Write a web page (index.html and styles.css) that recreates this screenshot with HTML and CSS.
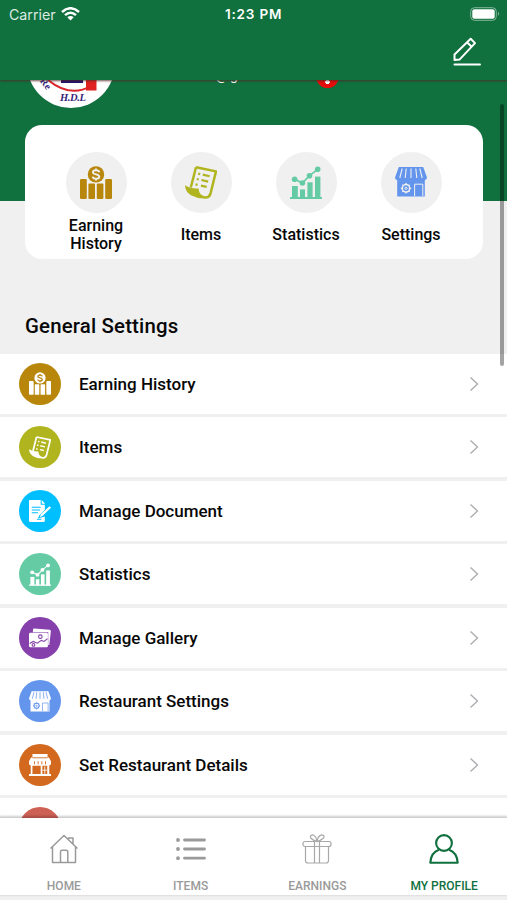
FILE: index.html
```html
<!DOCTYPE html>
<html lang="en">
<head>
<meta charset="utf-8">
<title>My Profile</title>
<link rel="stylesheet" href="styles.css">
</head>
<body>
<svg class="sprite" aria-hidden="true">
  <symbol id="earning" viewBox="0 0 32 33">
    <g fill="currentColor"><circle cx="16" cy="8.4" r="8.2"/><rect x="0" y="13" width="6.8" height="20" rx="1.2"/><rect x="8.4" y="17.6" width="6.6" height="15.4" rx="1"/><rect x="16.8" y="17.6" width="6.6" height="15.4" rx="1"/><rect x="25.2" y="13" width="6.8" height="20" rx="1.2"/></g>
    <path class="cut-line" d="M19.300 6.200C18.800 3.600 12.900 3.600 12.900 6.200 12.900 9 19.300 7.900 19.300 10.700 19.300 13.400 13.100 13.400 12.700 10.700M16 2.500V4.500M16 12.500V14.500" fill="none" stroke-width="1.900"/>
  </symbol>
  <symbol id="items" viewBox="0 0 32 33">
    <path d="M11 1.2 31 5.4 25.4 28Q23.8 32.2 19 31.4M11 1.2 5.8 21.5" fill="none" stroke="currentColor" stroke-width="2.5" stroke-linejoin="round"/>
    <path d="M0 19.2Q6 23 13.5 22.4 14.2 29.5 20 30.3L18.5 32.6Q12 32.4 6 29.2 .2 25.8 0 19.2Z" fill="currentColor"/>
    <path d="m13.2 7.6 2 .5m2.600 .5 6.8 1.6M11.8 13l2 .5m2.600 .5 6.8 1.6M10.5 18.4l2 .5m3.400.7 5.8 1.3" fill="none" stroke="currentColor" stroke-width="2.200"/>
  </symbol>
  <symbol id="stats" viewBox="0 0 32 33">
    <g fill="currentColor"><rect x="0" y="31" width="32" height="2" rx=".5"/><rect x="2" y="20" width="5.8" height="12"/><rect x="10" y="23.4" width="5" height="9"/><rect x="17.4" y="16.3" width="5.2" height="16"/><rect x="25" y="10.6" width="5.4" height="22"/><circle cx="4.6" cy="13.3" r="2.8"/><circle cx="12.4" cy="17" r="2.8"/><circle cx="19.5" cy="9.7" r="2.8"/><circle cx="27.7" cy="3.3" r="2.8"/></g>
    <path d="m4.6 13.3 7.8 3.7 7.1-7.3 8.2-6.4" fill="none" stroke="currentColor" stroke-width="1.6"/>
  </symbol>
  <symbol id="shop" viewBox="0 0 32 30">
    <path d="M3.8 0H28.2L32 10.5Q31.5 13 29.8 13V29.5H2.2V13Q.2 13 0 10.5Z" fill="currentColor"/>
    <g fill="none" class="cut-line"><path d="M7.2 1.5 4.8 11M11.2 1.5l-1 9.5M16 1.5V11M20.8 1.5l1 9.5M24.8 1.5l2.4 9.5" stroke-width="1.1"/><path d="M19.6 29V17.2h8.2V29" stroke-width="1"/><circle cx="11" cy="21.3" r="3.7" stroke-width="1.5"/><circle cx="11" cy="21.3" r="1.1" stroke-width="1"/><path d="M11 16v1.500M11 25v1.500M5.800 21.3h1.500M14.7 21.3h1.500M7.400 17.700l.9.9m5.4 5.4.9.9m0-7.200-.9.9M8.300 24l-.9.9" stroke-width="1.300"/></g>
  </symbol>
  <symbol id="document" viewBox="0 0 32 32">
    <path d="M1 0H17V7H23V14L15 22 13 27 23 24V30Q23 32 21 32H2Q0 32 0 30V1Q0 0 1 0ZM18.500 0 23.500 5.500H18.500ZM29.800 9 32 11.200 20 23 15.500 25 17.500 20.500Z" fill="currentColor"/>
    <path class="cut-line" d="M4 10.500H17M4 14.500H16M4 18.500H13M11.500 28H18" fill="none" stroke-width="1.500"/>
  </symbol>
  <symbol id="gallery" viewBox="0 0 32 28">
    <path d="M6 1Q6 0 7.500 0L30 2Q32 2.300 31.800 4L29.500 24H28V5.500H5.500Z" fill="currentColor"/>
    <rect x="0" y="6.500" width="27.500" height="21" rx="2" fill="currentColor"/>
    <g class="cut-line" fill="none" stroke-width="1.600"><circle cx="16.500" cy="12" r="2.600"/><path d="m1 22 5-3 6 2.500 6-4 4 1.500 5-4"/><circle cx="6.500" cy="24" r="2"/></g>
  </symbol>
  <symbol id="store" viewBox="0 0 32 32">
    <path d="M5 0H27V5H29L32 10.500V14Q32 16.500 29.500 16.500V29H32V32H0V29H2.500V16.500Q0 16.500 0 14V10.500L3 5H5ZM5 17V29H17V17ZM19.500 17V29H26.500V17Z" fill="currentColor" fill-rule="evenodd"/>
    <path class="cut-line" d="M5 5.500H27M8 10.500V15M13.300 10.500V15M18.700 10.500V15M24 10.500V15" fill="none" stroke-width="1.300"/>
    <path d="M23 18V29M20 23.500H26" stroke="currentColor" stroke-width="1.200"/>
  </symbol>
  <symbol id="chevron" viewBox="0 0 10 16"><path d="m1.500 1.500 7 6.500-7 6.500" fill="none" stroke="#adadb1" stroke-width="1.400"/></symbol>
</svg>

<header class="top">
  <div class="status">
    <div class="carrier">Carrier
      <svg width="19" height="14" viewBox="0 0 19 14"><path d="M1 5Q9.500-2.500 18 5M4 8.100Q9.500 3.300 15 8.100" fill="none" stroke="#fff" stroke-width="2.500"/><path d="M6.300 10.300Q9.500 7.700 12.700 10.300L9.500 13.600Z" fill="#fff"/></svg>
    </div>
    <div class="clock">1:23 PM</div>
    <svg class="battery" width="31" height="14" viewBox="0 0 31 14"><rect x=".7" y=".7" width="25.600" height="12.600" rx="3.800" fill="none" stroke="#86b79c"/><rect x="2.300" y="2.300" width="22.400" height="9.400" rx="2" fill="#fff"/><path d="M28 4.800Q30.200 6.800 28 9Z" fill="#86b79c"/></svg>
  </div>
  <div class="toolbar">
    <svg width="30" height="30" viewBox="0 0 30 30" fill="none" stroke="#fff"><path d="M2.500 23V17.500L18.700 1.800 23 6.100 7.500 22.600ZM15 5.300l4.600 4.500" stroke-width="2" stroke-linejoin="round"/><path d="M2.500 27.500H28" stroke-width="2" stroke-linecap="round"/></svg>
  </div>
</header>

<main class="content">
  <section class="hero">
    <div class="profile">
      <svg class="avatar" width="88" height="88" viewBox="0 0 88 88"><circle cx="44" cy="44" r="44" fill="#fff"/><path d="M21 60Q43 78 64 66" fill="none" stroke="#d8262b" stroke-width="2"/><rect x="34" y="48" width="22" height="15" fill="#24156b"/><rect x="59" y="55" width="10.500" height="15.500" fill="#e02020"/><text class="initials" x="46" y="80.500" text-anchor="middle" textLength="26">H.D.L</text><text class="ring" transform="translate(12.500 61) rotate(52)">Re</text></svg>
      <span class="email">@g</span>
      <span class="alert"></span>
    </div>
    <div class="card">
      <div class="tile"><div class="disc gold"><svg width="32" height="33"><use href="#earning"/></svg></div><div class="label">Earning History</div></div>
      <div class="tile"><div class="disc olive"><svg width="32" height="33"><use href="#items"/></svg></div><div class="label">Items</div></div>
      <div class="tile"><div class="disc mint"><svg width="32" height="33"><use href="#stats"/></svg></div><div class="label">Statistics</div></div>
      <div class="tile"><div class="disc blue"><svg width="32" height="30"><use href="#shop"/></svg></div><div class="label">Settings</div></div>
    </div>
  </section>
  <h2>General Settings</h2>
  <ul class="list">
    <li><span class="dot gold"><svg width="22" height="23"><use href="#earning"/></svg></span><span class="name">Earning History</span><svg class="chev"><use href="#chevron"/></svg></li>
    <li><span class="dot olive"><svg width="22" height="23"><use href="#items"/></svg></span><span class="name">Items</span><svg class="chev"><use href="#chevron"/></svg></li>
    <li><span class="dot sky"><svg width="22" height="22"><use href="#document"/></svg></span><span class="name">Manage Document</span><svg class="chev"><use href="#chevron"/></svg></li>
    <li><span class="dot mint"><svg width="22" height="23"><use href="#stats"/></svg></span><span class="name">Statistics</span><svg class="chev"><use href="#chevron"/></svg></li>
    <li><span class="dot purple"><svg width="22" height="20"><use href="#gallery"/></svg></span><span class="name">Manage Gallery</span><svg class="chev"><use href="#chevron"/></svg></li>
    <li><span class="dot blue"><svg width="22" height="21"><use href="#shop"/></svg></span><span class="name">Restaurant Settings</span><svg class="chev"><use href="#chevron"/></svg></li>
    <li><span class="dot orange"><svg width="22" height="22"><use href="#store"/></svg></span><span class="name">Set Restaurant Details</span><svg class="chev"><use href="#chevron"/></svg></li>
    <li><span class="dot red"></span></li>
  </ul>
  <div class="scrollbar"></div>
</main>

<nav class="tabs">
  <a class="tab"><svg width="30" height="30" viewBox="0 0 30 30" fill="none" stroke="currentColor" stroke-width="1.500" stroke-linejoin="round"><path d="M1.500 14.500 15 1.500 28.500 14.500M3.500 13V28.500H26.500V13M11.500 28.500V18Q11.500 16.300 13 16.300H17Q18.800 16.300 18.800 18V28.500M19.500 5.500V4H24V10"/></svg><span>HOME</span></a>
  <a class="tab"><svg width="30" height="30" viewBox="0 0 30 30" fill="none" stroke="currentColor" stroke-width="2.800" stroke-linecap="round"><path d="M8.500 6H28.500M8.500 15H28.500M8.500 24.200H28.500"/><path d="M2 6h.01M2 15h.01M2 24.200h.01" stroke-width="3.800"/></svg><span>ITEMS</span></a>
  <a class="tab gift"><svg width="30" height="30" viewBox="0 0 30 30" fill="none" stroke="currentColor" stroke-width="1.200"><rect x="1" y="7.500" width="28" height="5" rx="2"/><path d="M3.500 12.500V26.500Q3.500 29 6 29H24Q26.500 29 26.500 26.500V12.500M12.500 7.500V29M17.500 7.500V29M14.500 7.500C10 6 7 3 9 1.500S14 2 14.500 5.500ZM15.500 7.500C20 6 23.500 3 21.500 1.500S16 2 15.500 5.500Z"/></svg><span>EARNINGS</span></a>
  <a class="tab active"><svg width="30" height="30" viewBox="0 0 30 30" fill="none" stroke="currentColor" stroke-width="2.100" stroke-linejoin="round"><circle cx="15" cy="9" r="7.900"/><path d="M10 15.800Q2 18.500 1.300 28.700H28.700Q28 18.500 20 15.800"/></svg><span>MY PROFILE</span></a>
</nav>
</body>
</html>
```

FILE: styles.css
```css
* { box-sizing: border-box; }
body {
  margin: 0;
  width: 507px;
  height: 900px;
  display: flex;
  flex-direction: column;
  overflow: hidden;
  background: #f0f0f0;
  color: #080808;
  font-family: Roboto, "Liberation Sans", sans-serif;
  font-weight: 500;
}
svg { display: block; flex: none; }
.sprite { position: absolute; width: 0; height: 0; }

.top {
  flex: none;
  height: 80px;
  background: #10703e;
  color: #fff;
  box-shadow: 0 1px 2px rgba(80, 40, 35, .8);
  position: relative;
  z-index: 1;
}
.status {
  height: 28px;
  padding: 0 6px 0 9px;
  display: grid;
  grid-template-columns: 216px auto 1fr;
  align-items: center;
  font: 14.200px Inter, sans-serif;
}
.carrier { display: flex; align-items: center; gap: 5px; color: #dcebe2; }
.clock { font-size: 13.500px; font-weight: 600; letter-spacing: .8px; white-space: nowrap; }
.battery { justify-self: end; }
.toolbar { display: flex; justify-content: flex-end; padding: 9px 25px 0 0; }

.content { flex: none; height: 738px; overflow: hidden; position: relative; }
.hero { height: 179px; padding: 0 25px; background: linear-gradient(#10703e 121px, #f0f0f0 121px); }
.profile { height: 45px; display: flex; align-items: flex-start; }
.avatar { margin: -60px 0 0 1.500px; }
.initials { font: italic bold 10.500px "Liberation Serif", serif; fill: #35257c; }
.ring { font: bold 10px "Liberation Serif", serif; fill: #35257c; }
.email { margin: -14px 0 0 101px; color: #fff; font-size: 14px; font-weight: 400; line-height: 18px; letter-spacing: 2px; }
.alert {
  margin: -15px 0 0 76px;
  width: 23px;
  height: 23px;
  border-radius: 50%;
  background: radial-gradient(circle at 11.500px 17px, #fff 2px, #e60c0c 2.500px);
}
.card {
  height: 134px;
  width: 457.500px;
  padding: 26.500px 18.500px 0;
  border-radius: 17px;
  background: #fff;
  display: grid;
  grid-template-columns: repeat(4, 105px);
}
.tile { display: flex; flex-direction: column; align-items: center; }
.disc {
  width: 61px;
  height: 61px;
  border-radius: 50%;
  background: #f0f0f0;
  display: flex;
  align-items: center;
  justify-content: center;
  --cut: #f0f0f0;
}
.label { width: 80px; height: 36px; margin-top: 4px; display: grid; place-items: center; text-align: center; font-size: 16px; line-height: 18px; }
.gold { --tone: #b8860b; }
.olive { --tone: #b0b41f; }
.mint { --tone: #64cba5; }
.blue { --tone: #6495ed; }
.sky { --tone: #00bfff; }
.purple { --tone: #8540ab; }
.orange { --tone: #d2691e; }
.red { --tone: #cd6155; }
.disc { color: var(--tone); }
.cut-line { stroke: var(--cut); }

h2 { margin: 0; height: 94.500px; padding: 55px 25px 0; font-size: 20.400px; line-height: 24px; font-weight: 500; letter-spacing: .17px; }
.list { list-style: none; margin: 0; padding: 0; display: grid; gap: 3.500px; }
.list li { height: 60px; padding: 0 28px 0 19px; background: #fff; display: flex; align-items: center; font-size: 17px; }
.dot {
  width: 42px;
  height: 42px;
  border-radius: 50%;
  background: var(--tone);
  color: #fff;
  --cut: var(--tone);
  display: flex;
  align-items: center;
  justify-content: center;
}
.name { flex: 1; margin-left: 18px; }
.chev { width: 10px; height: 16px; }
.scrollbar { position: absolute; right: 3px; top: 24px; width: 4px; height: 262px; border-radius: 2px; background: rgba(0, 0, 0, .36); }

.tabs {
  flex: none;
  height: 77px;
  background: #fff;
  display: grid;
  grid-template-columns: repeat(4, 1fr);
  box-shadow: 0 -1px 2px 1px rgba(0, 0, 0, .2);
  position: relative;
}
.tab { display: flex; flex-direction: column; align-items: center; padding-top: 16px; color: #9a9a9a; font-size: 12px; line-height: 14px; }
.tab svg { margin-left: 1px; }
.tab span { margin: 15px 0 0 1px; }
.gift svg { color: #a8a8a8; }
.active { color: #10703e; }
```
